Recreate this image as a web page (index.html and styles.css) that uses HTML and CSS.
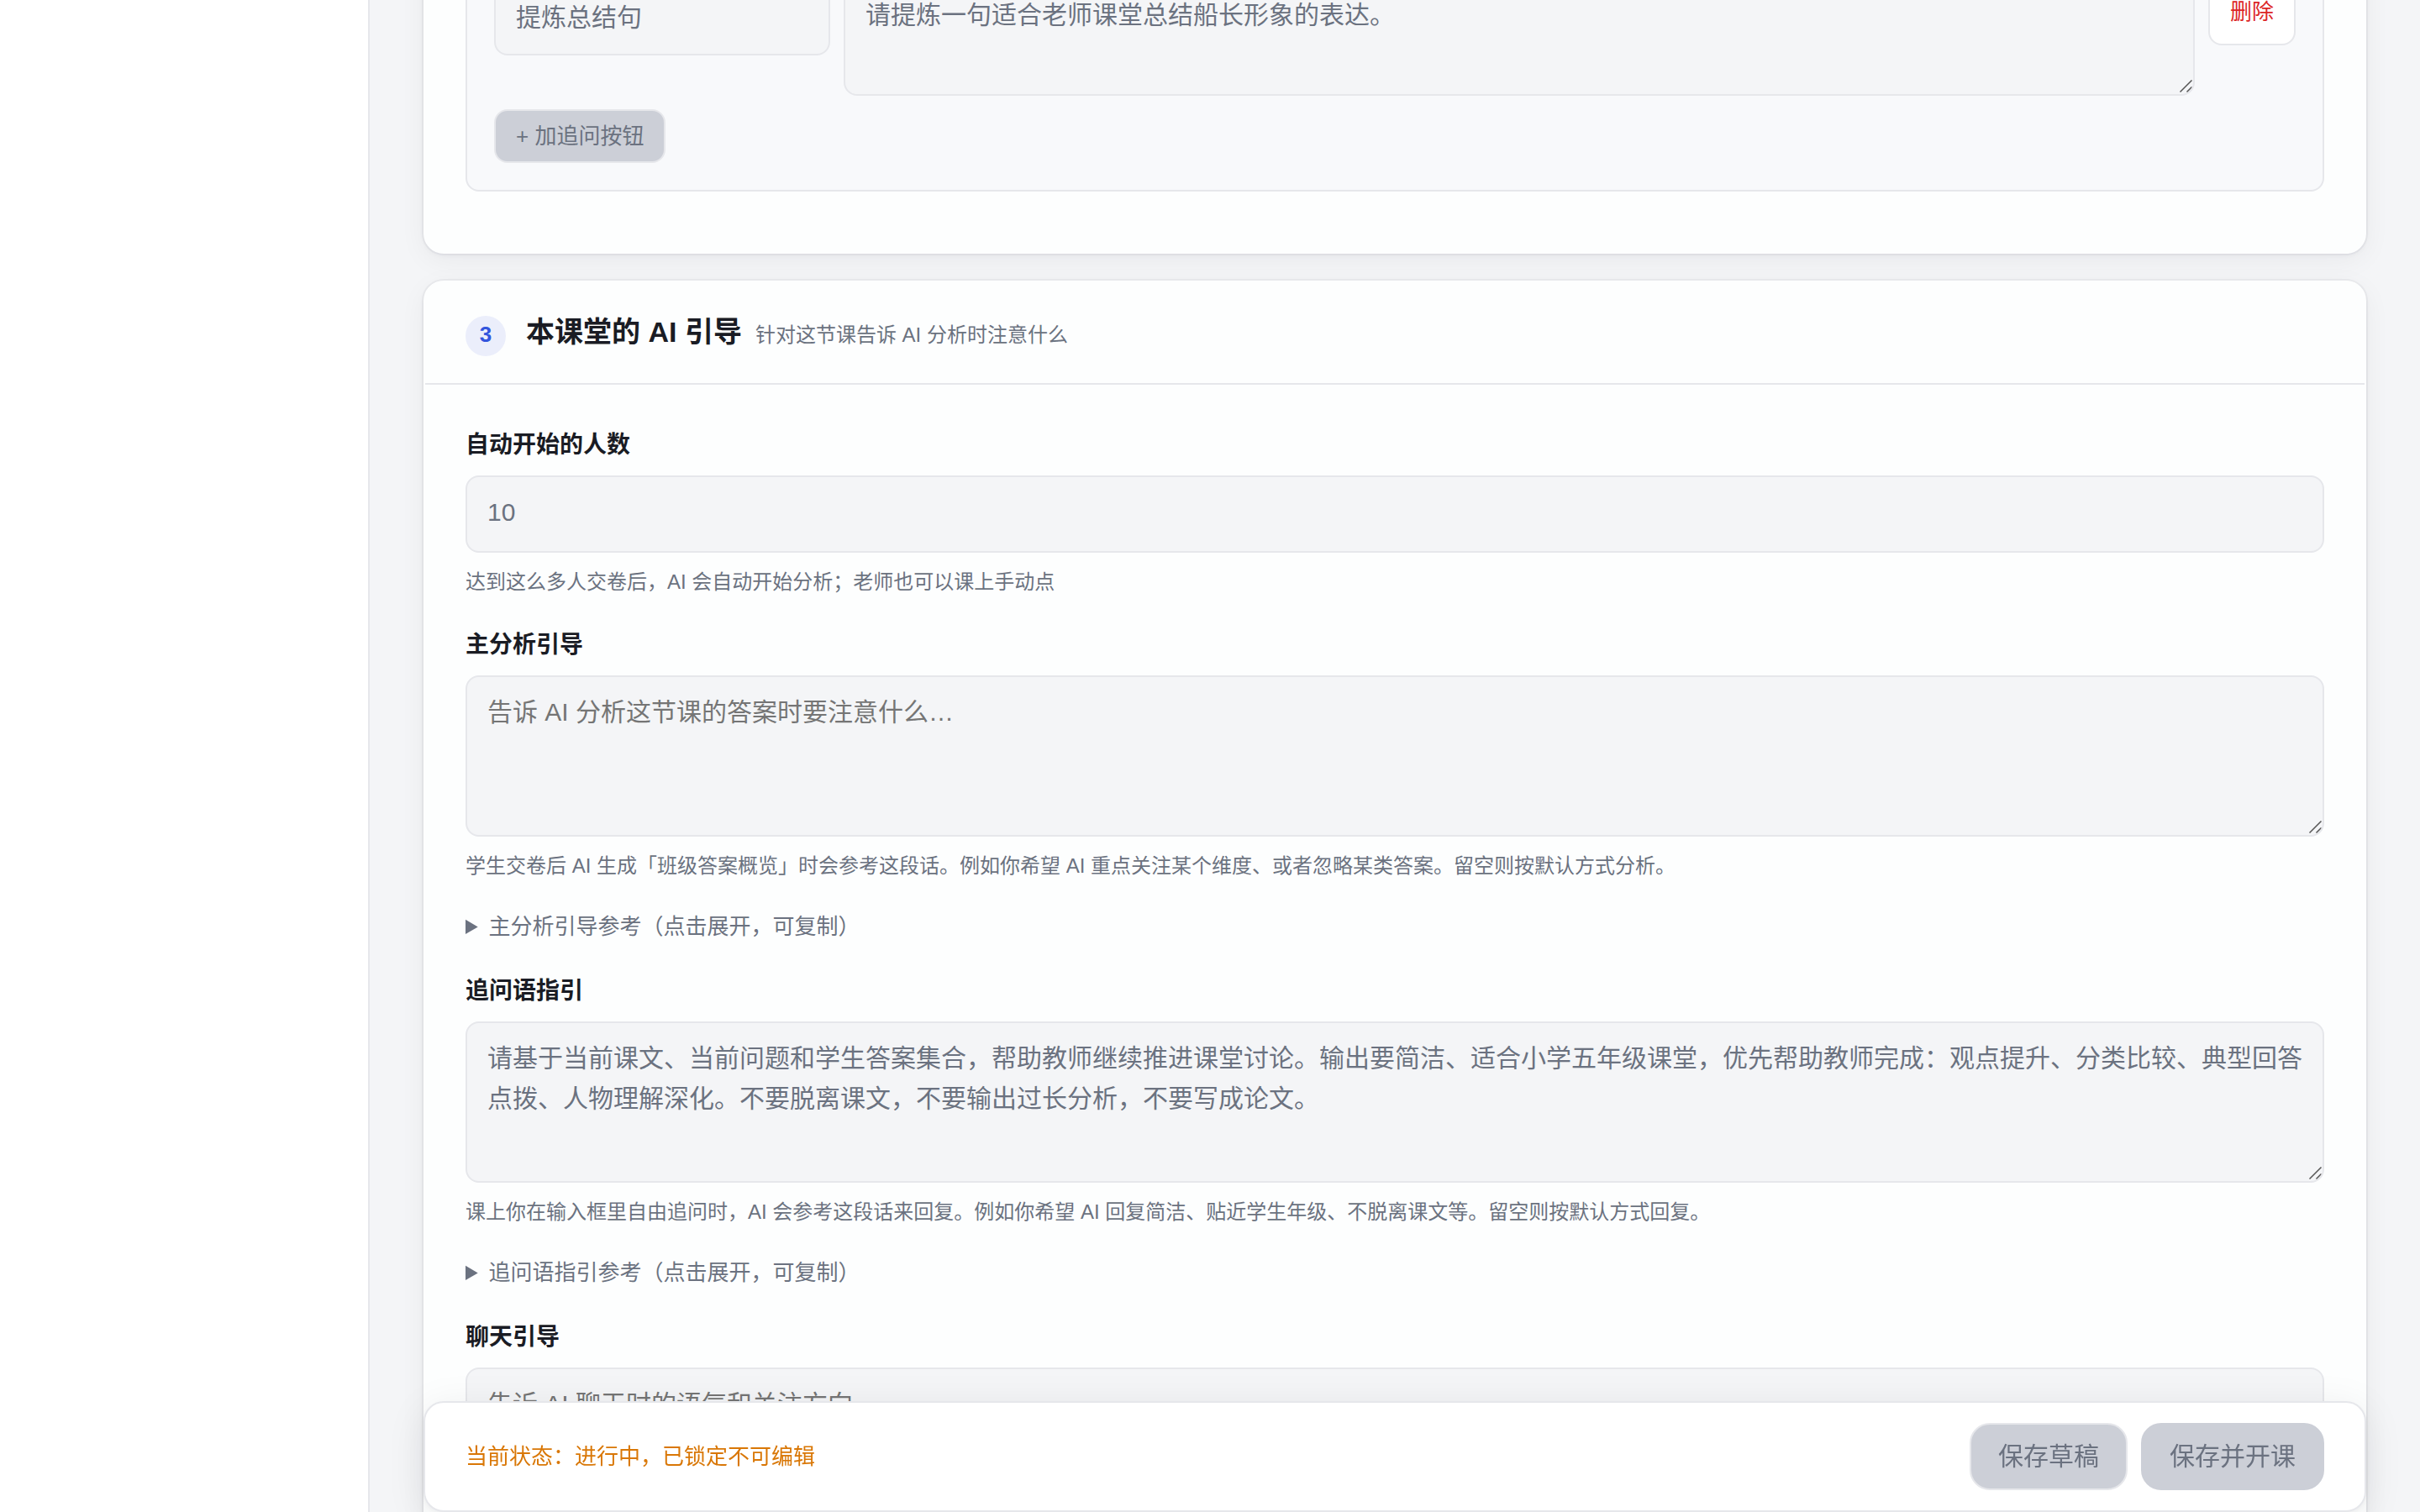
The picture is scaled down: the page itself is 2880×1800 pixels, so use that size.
FILE: index.html
```html
<!DOCTYPE html>
<html lang="zh-CN">
<head>
    <meta charset="UTF-8">
    <meta name="viewport" content="width=device-width, initial-scale=1.0">
    <title>编辑课堂</title>
    <link rel="stylesheet" href="styles.css">
</head>
<body>
    <aside class="sidebar"></aside>
    <main class="main">
        <form class="editor">
            <section class="card">
                <div class="card-body">
                    <div class="panel">
                        <div class="prompt-row">
                            <input class="field" type="text" value="提炼总结句" aria-label="按钮名称" disabled>
                            <textarea class="field short" aria-label="追问内容" disabled>请提炼一句适合老师课堂总结船长形象的表达。</textarea>
                            <button class="btn-delete" type="button">删除</button>
                        </div>
                        <button class="btn-add" type="button" disabled>+ 加追问按钮</button>
                    </div>
                </div>
            </section>

            <section class="card">
                <header class="card-head">
                    <span class="step">3</span>
                    <h2>本课堂的 AI 引导</h2>
                    <span class="subtitle">针对这节课告诉 AI 分析时注意什么</span>
                </header>
                <div class="card-body">
                    <div class="group">
                        <label for="autoStart">自动开始的人数</label>
                        <input class="field" id="autoStart" type="text" value="10" disabled>
                        <p class="help">达到这么多人交卷后，AI 会自动开始分析；老师也可以课上手动点</p>
                    </div>
                    <div class="group">
                        <label for="mainGuide">主分析引导</label>
                        <textarea class="field" id="mainGuide" placeholder="告诉 AI 分析这节课的答案时要注意什么…" disabled></textarea>
                        <p class="help">学生交卷后 AI 生成「班级答案概览」时会参考这段话。例如你希望 AI 重点关注某个维度、或者忽略某类答案。留空则按默认方式分析。</p>
                    </div>
                    <details class="reference">
                        <summary>主分析引导参考（点击展开，可复制）</summary>
                    </details>
                    <div class="group">
                        <label for="followGuide">追问语指引</label>
                        <textarea class="field" id="followGuide" disabled>请基于当前课文、当前问题和学生答案集合，帮助教师继续推进课堂讨论。输出要简洁、适合小学五年级课堂，优先帮助教师完成：观点提升、分类比较、典型回答点拨、人物理解深化。不要脱离课文，不要输出过长分析，不要写成论文。</textarea>
                        <p class="help">课上你在输入框里自由追问时，AI 会参考这段话来回复。例如你希望 AI 回复简洁、贴近学生年级、不脱离课文等。留空则按默认方式回复。</p>
                    </div>
                    <details class="reference">
                        <summary>追问语指引参考（点击展开，可复制）</summary>
                    </details>
                    <div class="group">
                        <label for="chatGuide">聊天引导</label>
                        <textarea class="field" id="chatGuide" placeholder="告诉 AI 聊天时的语气和关注方向…" disabled></textarea>
                    </div>
                </div>
            </section>

            <footer class="action-bar">
                <span class="status">当前状态：进行中，已锁定不可编辑</span>
                <div class="actions">
                    <button class="btn btn-outline" type="button" disabled>保存草稿</button>
                    <button class="btn" type="submit" disabled>保存并开课</button>
                </div>
            </footer>
        </form>
    </main>
</body>
</html>
```
FILE: styles.css
```css
* {
    box-sizing: border-box;
}
body {
    margin: 0;
    height: 100vh;
    display: flex;
    overflow: hidden;
    background: #f4f5f7;
    color: #1a1c24;
    font-family: "Liberation Sans", "Noto Sans CJK SC", sans-serif;
    font-size: 30px;
    line-height: 48px;
}
input, textarea, button {
    font: inherit;
}

.sidebar {
    width: 440px;
    flex-shrink: 0;
    background: #fff;
    border-right: 2px solid #e6e7eb;
}
.main {
    flex: 1;
    min-width: 0;
    height: 100vh;
    padding: 0 64px;
    overflow: hidden;
}
/* the form is scrolled up under the top edge */
.editor {
    display: flex;
    flex-direction: column;
    gap: 32px;
    margin-top: -110px;
}

/* cards */
.card {
    background: #fdfefe;
    border: 2px solid #fdfefe;
    border-radius: 24px;
    box-shadow: 0 0 0 2px rgba(20, 24, 40, 0.04), 0 2px 6px rgba(20, 24, 40, 0.04), 0 8px 32px rgba(20, 24, 40, 0.05);
}
.card-head {
    display: flex;
    align-items: baseline;
    padding: 32px 48px;
    border-bottom: 2px solid #e6e7eb;
}
.card-head h2 {
    margin: 0 16px 0 24px;
    font-size: 34px;
    line-height: 54px;
}
.step {
    display: flex;
    justify-content: center;
    width: 48px;
    height: 48px;
    border-radius: 50%;
    background: #ebeefb;
    color: #3355dd;
    font-size: 26px;
    font-weight: bold;
    line-height: 44px;
}
.subtitle {
    color: #6b7280;
    font-size: 24px;
    line-height: 38px;
}
.card-body {
    display: flex;
    flex-direction: column;
    gap: 32px;
    padding: 48px;
}

/* follow-up buttons */
.panel {
    display: flex;
    flex-direction: column;
    align-items: flex-start;
    gap: 16px;
    margin-bottom: 24px;
    padding: 32px;
    background: #f8f9fb;
    border: 2px solid #e6e7eb;
    border-radius: 16px;
}
.prompt-row {
    display: grid;
    grid-template-columns: 400px 1fr auto;
    align-items: start;
    gap: 16px;
    width: 100%;
}
.btn-add, .btn-delete {
    padding: 12px 24px;
    border: 2px solid #e6e7eb;
    border-radius: 16px;
    font-size: 26px;
    line-height: 36px;
}
.btn-add {
    background: #cccfd7;
    color: #6b7280;
}
.btn-delete {
    height: 80px;
    background: #fff;
    color: #dc2626;
}

/* fields */
.group {
    display: flex;
    flex-direction: column;
    gap: 12px;
}
.group label {
    font-size: 28px;
    font-weight: bold;
    line-height: 48px;
}
.field {
    display: block;
    width: 100%;
    height: 92px;
    padding: 18px 24px 22px;
    border: 2px solid #e6e7eb;
    border-radius: 16px;
    background: #f4f5f7;
    color: #6b7280;
}
/* own resize handle, drawn in the bottom right corner */
textarea.field {
    height: 192px;
    resize: none;
    background: #f4f5f7 url("data:image/svg+xml,%3Csvg xmlns='http://www.w3.org/2000/svg' width='18' height='18'%3E%3Cpath d='M2.5 15.5l14-14M10.5 15.5l6-6' stroke='%23555' stroke-width='1.5'/%3E%3C/svg%3E") no-repeat right bottom;
}
textarea.short {
    height: 140px;
}
.field::placeholder {
    color: #757575;
}
.help {
    margin: 4px 0 0;
    color: #6b7280;
    font-size: 24px;
    line-height: 38px;
}
.reference summary {
    color: #6b7280;
    font-size: 26px;
    line-height: 42px;
    cursor: pointer;
}

/* bottom bar */
.action-bar {
    position: sticky;
    bottom: 0;
    display: flex;
    align-items: center;
    justify-content: space-between;
    padding: 24px 48px;
    background: #fff;
    border: 2px solid #e6e7eb;
    border-radius: 24px;
    box-shadow: 0 2px 6px rgba(20, 24, 40, 0.04), 0 8px 48px rgba(20, 24, 40, 0.08);
}
.status {
    color: #d97706;
    font-size: 26px;
}
.actions {
    display: flex;
    gap: 16px;
}
.btn {
    padding: 14px 32px;
    border: 2px solid #cccfd7;
    border-radius: 24px;
    background: #cccfd7;
    color: #6b7280;
}
.btn-outline {
    border-color: #e6e7eb;
}
```
